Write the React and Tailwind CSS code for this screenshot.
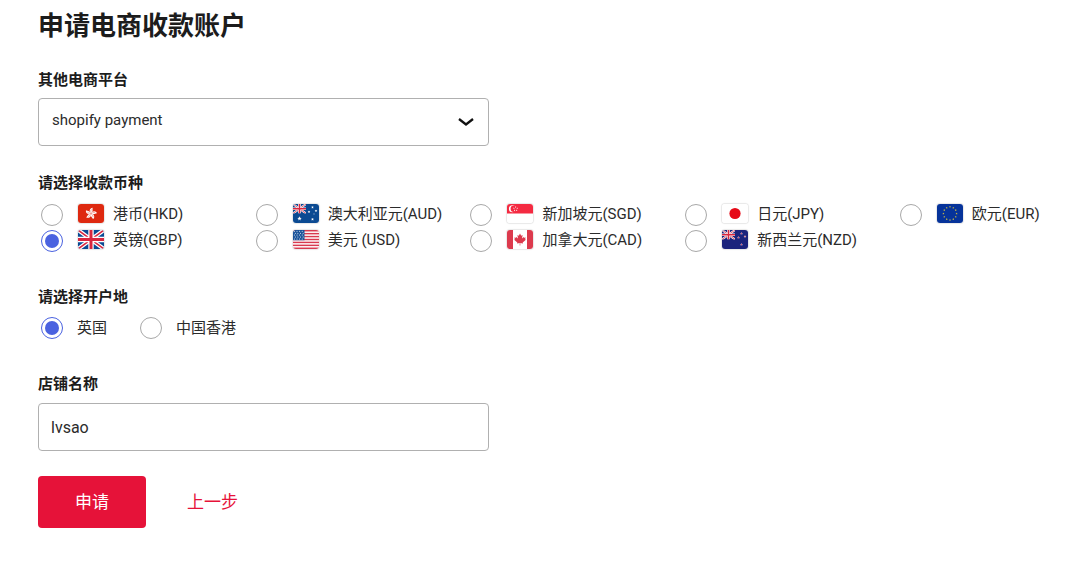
import React, { useState } from 'react';

function Star({ x, y, r, fill = '#fff' }) {
  const points = Array.from({ length: 10 }, (_, i) => {
    const a = (Math.PI * i) / 5 - Math.PI / 2;
    const d = i % 2 ? r * 0.42 : r;
    return `${x + d * Math.cos(a)},${y + d * Math.sin(a)}`;
  }).join(' ');
  return <polygon points={points} fill={fill} />;
}

function UnionJack({ width, height, blue }) {
  return (
    <svg width={width} height={height} viewBox="0 0 26 19" preserveAspectRatio="none">
      <path fill={blue} d="M0 0h26v19H0z" />
      <path stroke="#fff" strokeWidth="4" d="M0 0l26 19M26 0L0 19" />
      <path stroke="#d8263f" strokeWidth="1.5" d="M0 0l26 19M26 0L0 19" />
      <path stroke="#fff" strokeWidth="5.4" d="M13 0v19M0 9.5h26" />
      <path stroke="#d8263f" strokeWidth="3" d="M13 0v19M0 9.5h26" />
    </svg>
  );
}

const flags = {
  HKD: (
    <>
      <path fill="#de2910" d="M0 0h26v19H0z" />
      {[0, 72, 144, 216, 288].map((a) => (
        <g key={a} transform={`rotate(${a + 10} 13 9.5)`}>
          <path fill="#fff" d="M13 9.3C10.3 7.9 10.6 4.2 13.8 3.4C13 4.9 15.4 6.4 13 9.3z" />
          <path stroke="#de2910" strokeWidth=".35" fill="none" d="M13 8.6C12.2 7.5 12.2 6.3 12.8 5.4" />
        </g>
      ))}
    </>
  ),
  AUD: (
    <>
      <path fill="#0b4a92" d="M0 0h26v19H0z" />
      <UnionJack width="13" height="9.5" blue="#0b4a92" />
      <Star x={6.5} y={14.6} r={2.3} />
      <Star x={19.5} y={3.3} r={1.4} />
      <Star x={16} y={7.8} r={1.4} />
      <Star x={23} y={6.8} r={1.4} />
      <Star x={19.5} y={15.3} r={1.6} />
      <Star x={21} y={10} r={0.8} />
    </>
  ),
  SGD: (
    <>
      <path fill="#fff" d="M0 0h26v19H0z" />
      <path fill="#f42a41" d="M0 0h26v9.5H0z" />
      <circle cx="5.4" cy="4.8" r="3.5" fill="#fff" />
      <circle cx="6.9" cy="4.8" r="3.3" fill="#f42a41" />
      {[0, 1, 2, 3, 4].map((i) => (
        <Star
          key={i}
          x={8.6 + 1.8 * Math.sin((i * 2 * Math.PI) / 5)}
          y={4.8 - 1.8 * Math.cos((i * 2 * Math.PI) / 5)}
          r={0.9}
        />
      ))}
    </>
  ),
  JPY: (
    <>
      <path fill="#fff" d="M0 0h26v19H0z" />
      <circle cx="13" cy="9.5" r="5.6" fill="#e60a17" />
    </>
  ),
  EUR: (
    <>
      <path fill="#06339a" d="M0 0h26v19H0z" />
      {Array.from({ length: 12 }, (_, i) => (
        <Star
          key={i}
          x={13 + 6.6 * Math.sin((i * Math.PI) / 6)}
          y={9.5 - 6.6 * Math.cos((i * Math.PI) / 6)}
          r={1.1}
          fill="#e0c93a"
        />
      ))}
    </>
  ),
  GBP: <UnionJack width="26" height="19" blue="#0a4a94" />,
  USD: (
    <>
      <path fill="#fff" d="M0 0h26v19H0z" />
      {[0, 1, 2, 3, 4, 5, 6].map((i) => (
        <rect key={i} y={(i * 2 * 19) / 13} width="26" height={19 / 13} fill="#d83a50" />
      ))}
      <path fill="#1a5299" d="M0 0h11.5v10.2H0z" />
      {[0, 1, 2, 3, 4].flatMap((r) =>
        [0, 1, 2, 3].map((c) => (
          <circle key={`${r}${c}`} cx={1.4 + c * 2.6 + (r % 2) * 0.9} cy={1.3 + r * 1.9} r=".5" fill="#fff" />
        ))
      )}
    </>
  ),
  CAD: (
    <>
      <path fill="#fff" d="M0 0h26v19H0z" />
      <path fill="#dc3a4d" d="M0 0h6v19H0zM20 0h6v19h-6z" />
      <path
        fill="#dc3a4d"
        d="M13 3.6l1.2 2.2 1.4-.7-.6 3.3 1.7-1.5.4.9 1.6-.2-.6 1.7.8.5-3.2 2.6.3 1-2.7-.4v2.6h-.6V13l-2.7.4.3-1-3.2-2.6.8-.5-.6-1.7 1.6.2.4-.9L11 8.400l-.6-3.3 1.4.7z"
      />
    </>
  ),
  NZD: (
    <>
      <path fill="#1b237c" d="M0 0h26v19H0z" />
      <UnionJack width="13" height="9.5" blue="#1b237c" />
      {[[19.5, 3.5], [16.5, 7.5], [23, 6.5], [19.5, 14.5]].map(([x, y]) => (
        <g key={`${x}-${y}`}>
          <Star x={x} y={y} r={1.4} fill="#fff" />
          <Star x={x} y={y} r={0.9} fill="#d8263f" />
        </g>
      ))}
    </>
  ),
};

const currencies = [
  ['HKD', '港币(HKD)'],
  ['AUD', '澳大利亚元(AUD)'],
  ['SGD', '新加坡元(SGD)'],
  ['JPY', '日元(JPY)'],
  ['EUR', '欧元(EUR)'],
  ['GBP', '英镑(GBP)'],
  ['USD', '美元 (USD)'],
  ['CAD', '加拿大元(CAD)'],
  ['NZD', '新西兰元(NZD)'],
];

const regions = [
  ['GB', '英国'],
  ['HK', '中国香港'],
];

function Flag({ code }) {
  return (
    <svg
      aria-hidden="true"
      viewBox="0 0 26 19"
      className="h-[19px] w-[26px] shrink-0 rounded-[3px] shadow-[0_0_1px_1px_#e8e8e8]"
    >
      {flags[code]}
    </svg>
  );
}

function Radio(props) {
  return (
    <input
      type="radio"
      className="size-[22px] shrink-0 appearance-none rounded-full border border-[#a8a8a8] bg-clip-content p-[3px] checked:border-[#4a62e0] checked:bg-[#4a62e0]"
      {...props}
    />
  );
}

export default function App() {
  const [currency, setCurrency] = useState('GBP');
  const [region, setRegion] = useState('GB');
  const [shop, setShop] = useState('lvsao');

  return (
    <main className="bg-white pt-2 pr-10 pb-8 pl-[38px] font-[Roboto,'Noto_Sans_CJK_SC',sans-serif] text-[15px] leading-5 text-[#2b2b2b]">
      <h1 className="text-[26px] leading-9 font-bold text-[#1c1c1c]">申请电商收款账户</h1>
      <form className="mt-[26px]" onSubmit={(e) => e.preventDefault()}>
        <label htmlFor="platform" className="block font-bold text-[#1c1c1c]">其他电商平台</label>
        <div className="mt-2 grid w-full max-w-[451px] items-center">
          <select
            id="platform"
            className="col-start-1 row-start-1 h-12 w-full appearance-none rounded border border-[#b0b0b0] bg-white px-[13px] pb-1"
          >
            <option>shopify payment</option>
          </select>
          <svg
            aria-hidden="true"
            viewBox="0 0 16 8"
            className="pointer-events-none col-start-1 row-start-1 mr-[15px] h-2 w-4 justify-self-end"
          >
            <path d="M1 1l7 5.500 7-5.500" fill="none" stroke="#111" strokeWidth="2.300" />
          </svg>
        </div>

        <fieldset className="mt-[27px]">
          <legend className="font-bold text-[#1c1c1c]">请选择收款币种</legend>
          <div className="mt-[9px] grid grid-cols-[repeat(4,minmax(0,3fr))_minmax(0,2fr)]">
            {currencies.map(([code, name]) => (
              <label key={code} className="flex h-[26px] items-center pl-[3px] whitespace-nowrap">
                <Radio
                  name="currency"
                  value={code}
                  checked={currency === code}
                  onChange={() => setCurrency(code)}
                />
                <span className="flex items-center gap-[9px] pb-[3px] pl-[15px]">
                  <Flag code={code} />
                  {name}
                </span>
              </label>
            ))}
          </div>
        </fieldset>

        <fieldset className="mt-[33px]">
          <legend className="font-bold text-[#1c1c1c]">请选择开户地</legend>
          <div className="mt-2 flex gap-[30px]">
            {regions.map(([code, name]) => (
              <label key={code} className="flex h-[26px] items-center gap-[14px] pl-[3px]">
                <Radio
                  name="region"
                  value={code}
                  checked={region === code}
                  onChange={() => setRegion(code)}
                />
                {name}
              </label>
            ))}
          </div>
        </fieldset>

        <label htmlFor="shop" className="mt-[33px] block font-bold text-[#1c1c1c]">店铺名称</label>
        <input
          id="shop"
          type="text"
          value={shop}
          onChange={(e) => setShop(e.target.value)}
          className="mt-[9px] block h-12 w-full max-w-[451px] rounded border border-[#b0b0b0] px-3 text-base"
        />

        <div className="mt-[25px] flex items-center gap-[41px] text-[17px]">
          <button type="submit" className="h-[52px] w-[108px] rounded bg-[#e61239] text-white">
            申请
          </button>
          <a href="#previous" className="text-[#e61239]">上一步</a>
        </div>
      </form>
    </main>
  );
}
